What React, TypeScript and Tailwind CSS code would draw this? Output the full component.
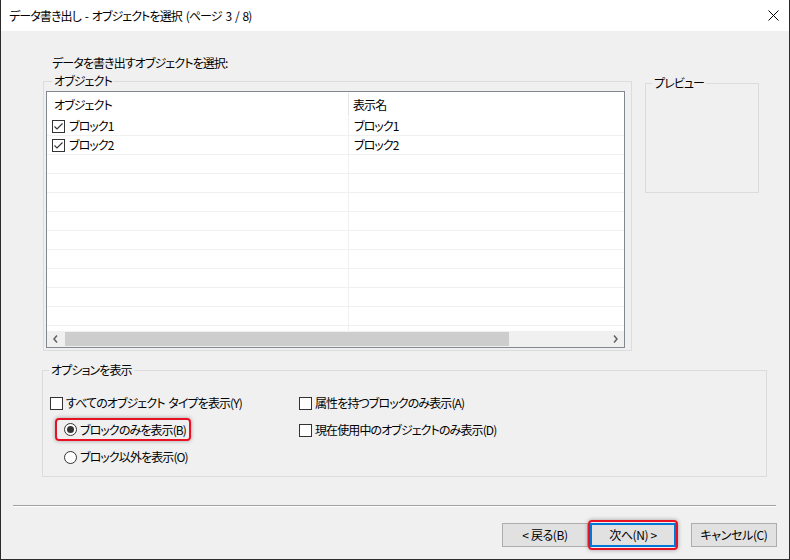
import React from 'react';

const rows = [
  { name: 'ブロック1', label: 'ブロック1', checked: true },
  { name: 'ブロック2', label: 'ブロック2', checked: true },
  ...Array.from({ length: 10 }, () => ({ name: '', label: '', checked: false })),
];

function CheckBox({ checked }: { checked?: boolean }) {
  return (
    <span className="w-[13px] h-[13px] border border-[#333333] bg-white flex items-center justify-center shrink-0">
      {checked && (
        <svg width="11" height="11" viewBox="0 0 11 11">
          <path d="M1.5 5.5 L4 8 L9.5 2.5" fill="none" stroke="#333333" strokeWidth="1.1" />
        </svg>
      )}
    </span>
  );
}

function Radio({ checked }: { checked?: boolean }) {
  return (
    <span className="w-[13px] h-[13px] rounded-full border border-[#333333] bg-white flex items-center justify-center shrink-0">
      {checked && <span className="w-[7px] h-[7px] rounded-full bg-[#333333]" />}
    </span>
  );
}

function Legend({ children }: { children: React.ReactNode }) {
  return <legend className="ml-[6px] px-[2px] leading-[16px]">{children}</legend>;
}

export default function App() {
  return (
    <div className="w-[790px] h-[560px] bg-[#f0f0f0] border-x border-b border-[#2b2b2b] flex flex-col text-[12px] leading-[16px] tracking-[-0.9px] [word-spacing:2px] whitespace-nowrap text-black font-['Noto_Sans_CJK_JP','Noto_Sans',sans-serif] [font-feature-settings:'palt'] overflow-hidden">
      {/* title bar */}
      <div className="h-[31px] bg-white flex items-center justify-between pl-[8px] pr-[10px] shrink-0">
        <span>データ書き出し - オブジェクトを選択 (ページ 3 / 8)</span>
        <svg width="11" height="11" viewBox="0 0 11 11">
          <path d="M0.5 0.5 L10.5 10.5 M10.5 0.5 L0.5 10.5" stroke="#000" strokeWidth="1" />
        </svg>
      </div>

      <div className="pl-[41px] flex flex-col">
        <div className="mt-[24px] ml-[10px]">データを書き出すオブジェクトを選択:</div>

        <div className="flex items-start mt-[2px]">
          {/* objects group */}
          <fieldset className="ml-[1px] w-[589px] h-[278px] border border-[#dcdcdc] pl-[2px] pt-[2px]">
            <Legend>オブジェクト</Legend>
            <div className="w-[579px] h-[257px] border border-[#828790] bg-white flex flex-col">
              <div className="h-[25px] flex items-center shrink-0">
                <div className="w-[301px] pl-[7px]">オブジェクト</div>
                <div className="w-px h-[23px] bg-[#e5e5e5]" />
                <div className="pl-[4px]">表示名</div>
              </div>
              <div className="flex-1 overflow-hidden">
                {rows.map((r, i) => (
                  <div key={i} className="h-[19px] flex border-b border-[#f0f0f0]">
                    <div className="w-[301px] flex items-center pl-[5px] gap-[4px]">
                      {r.name && <CheckBox checked={r.checked} />}
                      <span>{r.name}</span>
                    </div>
                    <div className="w-px bg-[#f0f0f0]" />
                    <div className="pl-[5px] flex items-center">{r.label}</div>
                  </div>
                ))}
              </div>
              {/* horizontal scrollbar */}
              <div className="h-[16px] bg-[#f0f0f0] flex items-center shrink-0">
                <div className="w-[17px] h-full flex items-center justify-center">
                  <svg width="5" height="8" viewBox="0 0 5 8">
                    <path d="M4 0.5 L1 4 L4 7.5" fill="none" stroke="#606060" strokeWidth="1.5" />
                  </svg>
                </div>
                <div className="ml-[1px] w-[444px] h-[14px] bg-[#cdcdcd]" />
                <div className="flex-1" />
                <div className="w-[17px] h-full flex items-center justify-center">
                  <svg width="5" height="8" viewBox="0 0 5 8">
                    <path d="M1 0.5 L4 4 L1 7.5" fill="none" stroke="#606060" strokeWidth="1.5" />
                  </svg>
                </div>
              </div>
            </div>
          </fieldset>

          {/* preview group */}
          <fieldset className="ml-[13px] mt-[2px] w-[114px] h-[118px] border border-[#dcdcdc]">
            <Legend>プレビュー</Legend>
          </fieldset>
        </div>

        {/* options group */}
        <fieldset className="mt-[11px] w-[725px] h-[115px] border border-[#dcdcdc] pt-[14px]">
          <Legend>オプションを表示</Legend>
          <div className="flex">
            <div className="w-[256px] flex flex-col">
              <div className="h-[22px] flex items-center gap-[3px] pl-[7px]">
                <CheckBox />
                <span>すべてのオブジェクト タイプを表示(Y)</span>
              </div>
              <div className="mt-[4px] ml-[12px] w-[136px] h-[23px] border-2 border-[#e81123] rounded-[4px] flex items-center gap-[3px] pl-[7px] shadow-[0_0_4px_rgba(0,0,0,0.35)]">
                <Radio checked />
                <span>ブロックのみを表示(B)</span>
              </div>
              <div className="mt-[5px] h-[22px] flex items-center gap-[3px] pl-[21px]">
                <Radio />
                <span>ブロック以外を表示(O)</span>
              </div>
            </div>
            <div className="flex flex-col">
              <div className="h-[22px] flex items-center gap-[3px]">
                <CheckBox />
                <span>属性を持つブロックのみ表示(A)</span>
              </div>
              <div className="mt-[5px] h-[22px] flex items-center gap-[3px]">
                <CheckBox />
                <span>現在使用中のオブジェクトのみ表示(D)</span>
              </div>
            </div>
          </div>
        </fieldset>
      </div>

      {/* separator */}
      <div className="mt-[28px] ml-[12px] w-[763px] h-[2px] border-t border-[#a0a0a0] border-b border-b-white" />

      {/* buttons */}
      <div className="mt-[13px] flex items-center justify-end pr-[12px] tracking-[-0.4px]">
        <button className="w-[86px] h-[24px] bg-[#e1e1e1] border border-[#adadad]">&lt; 戻る(B)</button>
        <div className="w-[90px] h-[30px] border-2 border-[#e81123] rounded-[4px] flex items-center justify-center shadow-[0_0_4px_rgba(0,0,0,0.35)]">
          <button className="w-[86px] h-[24px] bg-[#e1e1e1] border-2 border-[#0078d7]">次へ(N) &gt;</button>
        </div>
        <button className="ml-[13px] w-[86px] h-[24px] bg-[#e1e1e1] border border-[#adadad]">キャンセル(C)</button>
      </div>
    </div>
  );
}
